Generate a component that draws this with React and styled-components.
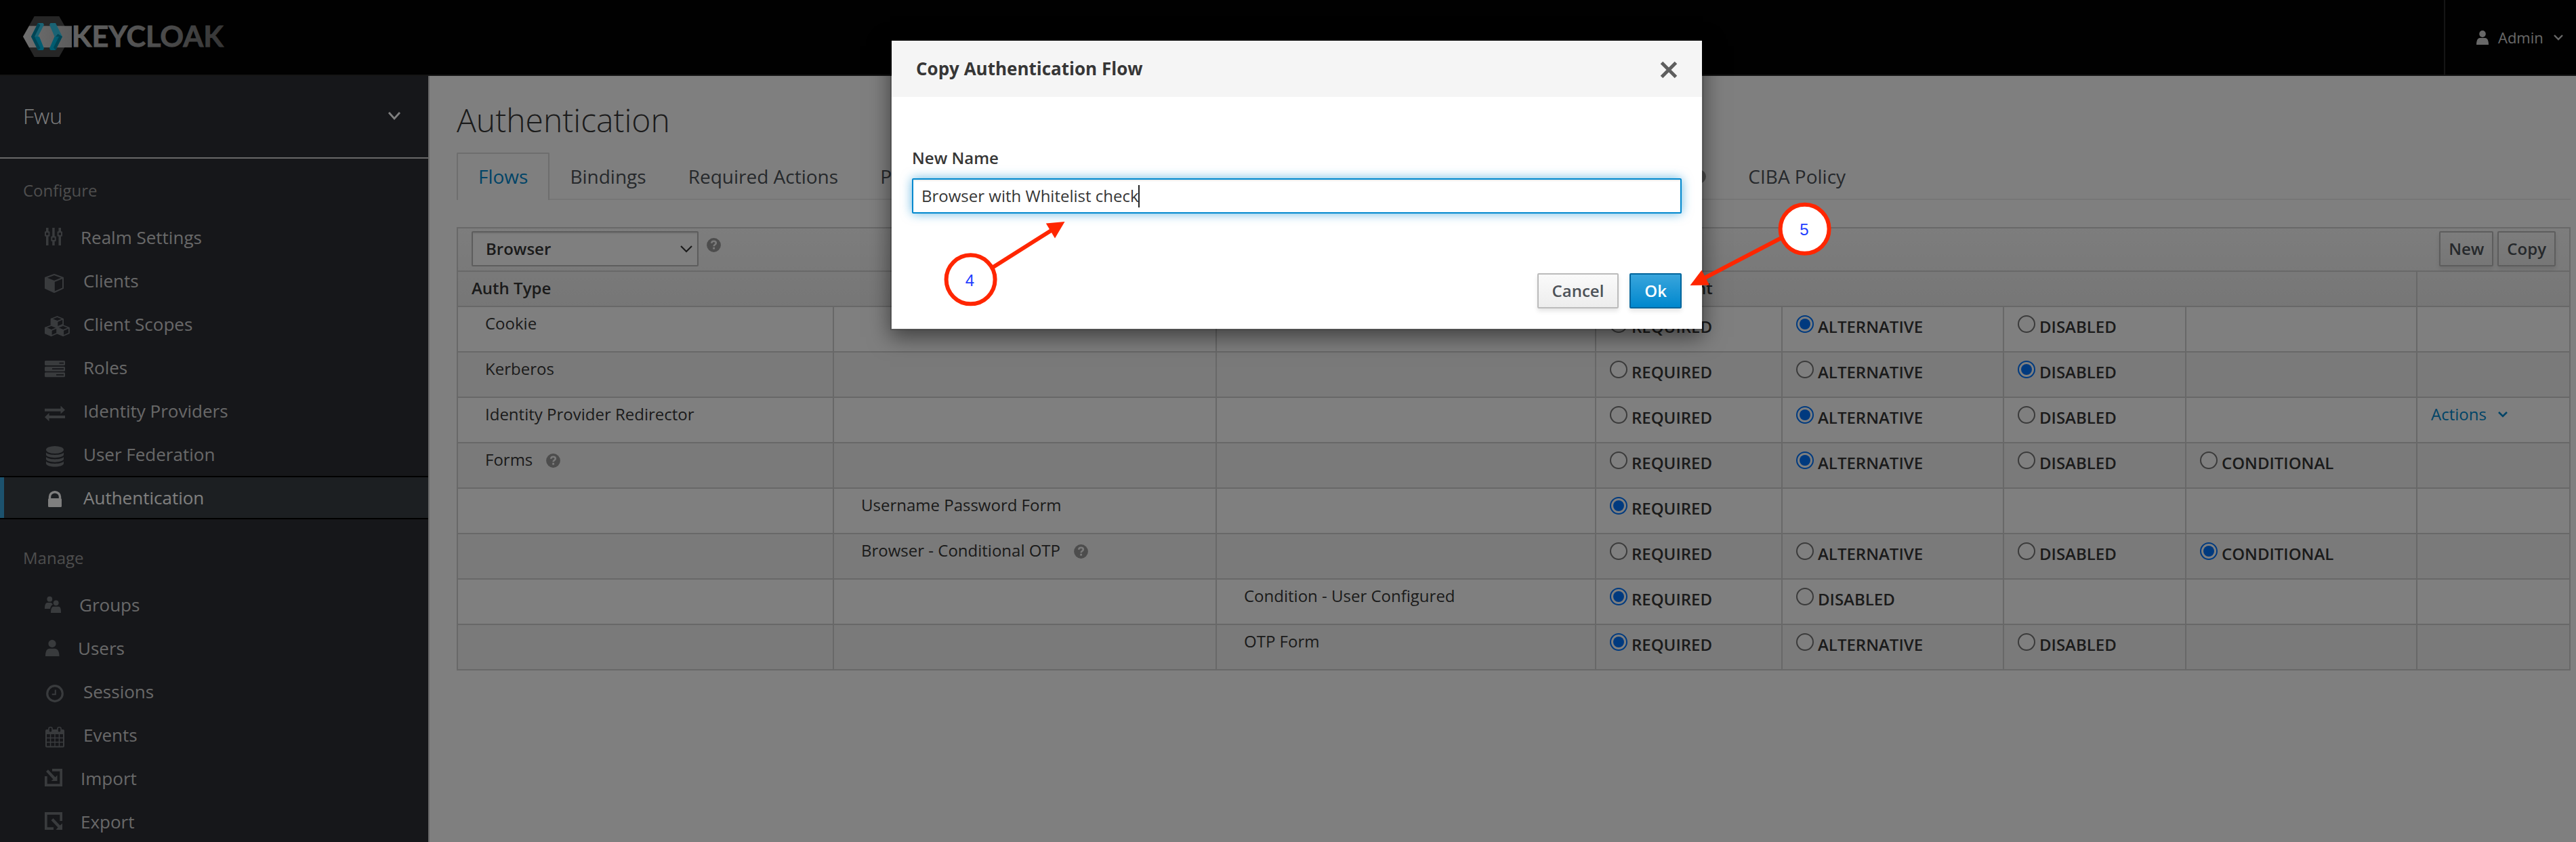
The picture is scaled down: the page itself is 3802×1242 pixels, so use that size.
import React from 'react';
import styled, { createGlobalStyle, css } from 'styled-components';

const GlobalStyle = createGlobalStyle`
  * { box-sizing: border-box; }
  html, body { margin: 0; padding: 0; }
  body {
    font-family: 'Open Sans', 'Noto Sans', sans-serif;
    font-size: 24px;
    line-height: 40px;
    color: #363636;
    background: #fff;
    overflow: hidden;
  }
`;

const Page = styled.div`
  position: relative;
  display: flex;
  flex-direction: column;
  width: 3802px;
  height: 1242px;
  overflow: hidden;
  background: #fff;
`;

/* ---------- top bar ---------- */

const TopBar = styled.header`
  flex: none;
  display: flex;
  justify-content: space-between;
  height: 112px;
  padding-left: 34px;
  background: #030303;
  border-bottom: 2px solid #2b2b2b;
`;

const LogoArt = styled.svg`
  display: block;
  width: 300px;
  height: 60px;
  margin-top: 24px;
`;

const UserMenu = styled.div`
  display: flex;
  align-items: center;
  width: 195px;
  padding-left: 46px;
  border-left: 2px solid #2b2b2b;
  color: #d1d1d1;
  font-size: 22px;
  line-height: 110px;

  span { margin: 0 15px 0 14px; }
`;

const Glyph = styled.svg`
  display: block;
  flex: none;
  overflow: visible;
  width: ${(p) => p.$w}px;
  height: ${(p) => p.$h}px;
  fill: currentColor;
`;

/* ---------- side bar ---------- */

const Body = styled.div`
  flex: 1;
  display: flex;
  min-height: 0;
`;

const Sidebar = styled.nav`
  flex: none;
  width: 634px;
  overflow: hidden;
  background: #2c2e35;
  border-right: 2px solid #d1d1d1;
`;

const RealmSelector = styled.div`
  display: flex;
  align-items: center;
  justify-content: space-between;
  height: 122px;
  padding: 0 41px 2px 34px;
  border-bottom: 2px solid #d1d1d1;
  color: #fff;
  font-size: 32px;
  font-weight: 300;
`;

const SectionTitle = styled.h2`
  margin: 0;
  height: ${(p) => p.$height}px;
  padding: ${(p) => p.$height - 57}px 0 0 34px;
  color: #9c9c9c;
  font-size: 24px;
  font-weight: 400;
`;

const NavItem = styled.a`
  position: relative;
  display: flex;
  height: 64px;
  padding-left: 66px;
  gap: 27px;
  line-height: 64px;
  font-size: 26px;
  color: #d1d1d1;

  svg { color: #72767b; }

  ${(p) => p.$active && css`
    color: #fff;
    background: #393f44;
    box-shadow: inset 0 2px #030303, inset 0 -2px #030303;
    svg { color: #fff; }
    &::before {
      content: '';
      position: absolute;
      inset: 2px auto 2px 0;
      width: 6px;
      background: #39a5dc;
    }
  `}
`;

/* ---------- main content ---------- */

const Content = styled.main`
  flex: 1;
  min-width: 0;
  padding: 38px 8px 0 40px;
`;

const Title = styled.h1`
  margin: 0 0 21px;
  font-size: 48px;
  line-height: 54px;
  font-weight: 300;
`;

const Tabs = styled.div`
  display: flex;
  height: 70px;
  border-bottom: 2px solid #ededed;
`;

const Tab = styled.a`
  display: flex;
  align-items: center;
  gap: 11px;
  height: 70px;
  margin-right: -2px;
  padding: 0 30px 2px;
  border: 2px solid transparent;
  border-bottom: 0;
  font-size: 28px;
  color: #4d5258;
  white-space: nowrap;

  ${(p) => p.$active && css`
    color: #0088ce;
    border-color: #dcdcdc;
    border-radius: 2px 2px 0 0;
    background: #fff;
  `}
`;

const Table = styled.div`
  margin-top: 40px;
  border: 2px solid #d1d1d1;
  border-width: 2px 0 0 2px;
`;

const TableHead = styled.div`
  background: linear-gradient(#fafafa, #ededed);
`;

const Toolbar = styled.div`
  display: flex;
  align-items: flex-start;
  height: 64px;
  padding: 4px 20px 0;
  border: 2px solid #d1d1d1;
  border-width: 0 2px 2px 0;
`;

const FlowSelect = styled.div`
  display: flex;
  align-items: center;
  justify-content: space-between;
  width: 335px;
  height: 52px;
  margin-right: 12px;
  padding: 0 7px 0 19px;
  background: #fff;
  border: 2px solid #bbb;
  border-radius: 2px;
  box-shadow: inset 0 2px 2px rgba(3, 3, 3, 0.075);
  font-weight: 600;

  & + svg { margin-top: 10px; }
`;

const ToolbarActions = styled.div`
  display: flex;
  gap: 6px;
  margin-left: auto;
`;

const Button = styled.button`
  height: 52px;
  padding: 0 ${(p) => (p.$compact ? 12 : 20)}px;
  border: 2px solid ${(p) => (p.$primary ? '#00659c' : '#bbb')};
  border-radius: 2px;
  background: ${(p) => (p.$primary
    ? 'linear-gradient(#39a5dc, #0088ce)'
    : 'linear-gradient(#fafafa, #ededed)')};
  box-shadow: 0 4px 6px rgba(3, 3, 3, 0.1);
  color: ${(p) => (p.$primary ? '#fff' : '#4d5258')};
  font: 600 24px/46px 'Open Sans', 'Noto Sans', sans-serif;
`;

const columns = '555px 565px 560px 275px 327px 269px 341px 226px';

const Row = styled.div`
  display: grid;
  grid-template-columns: ${columns};
  height: ${(p) => (p.$head ? 52 : 67)}px;
  background: ${(p) => (p.$striped ? '#f5f5f5' : 'transparent')};
`;

const Cell = styled.div`
  display: flex;
  align-items: flex-start;
  grid-column: span ${(p) => p.$span || 1};
  padding: 4px 0 0 ${(p) => (p.$indent ? 40 : 20)}px;
  border: 2px solid #d1d1d1;
  border-width: 0 2px 2px 0;
  font-weight: ${(p) => (p.$strong ? 600 : 400)};
  white-space: nowrap;

  svg { margin: 11px 0 0 20px; }
`;

const Option = styled.label`
  display: flex;
  gap: 6px;
  padding-top: 5px;
  font-weight: 600;
`;

const Radio = styled.span`
  flex: none;
  display: grid;
  place-items: center;
  width: 26px;
  height: 26px;
  margin-top: 3px;
  border: 2px solid ${(p) => (p.$on ? '#0075ff' : '#767676')};
  border-radius: 50%;
  background: #fff;

  &::after {
    content: '';
    width: 16px;
    height: 16px;
    border-radius: 50%;
    background: ${(p) => (p.$on ? '#0075ff' : 'transparent')};
  }
`;

const ActionsLink = styled.a`
  display: flex;
  align-items: center;
  gap: 17px;
  color: #0088ce;

  svg { margin: 1px 0 0; }
`;

/* ---------- dialog ---------- */

const Backdrop = styled.div`
  position: absolute;
  inset: 0;
  display: flex;
  align-items: flex-start;
  justify-content: center;
  padding: 58px 0 0 26px;
  background: rgba(0, 0, 0, 0.5);
`;

const Dialog = styled.section`
  width: 1200px;
  height: 429px;
  border: 2px solid rgba(0, 0, 0, 0.2);
  background: #fff;
  background-clip: padding-box;
  box-shadow: 0 10px 30px rgba(0, 0, 0, 0.5);
`;

const DialogHeader = styled.div`
  display: flex;
  justify-content: space-between;
  height: 83px;
  padding: 0 36px;
  background: #f5f5f5;
  font-size: 26px;
  font-weight: 700;
  line-height: 82px;

  svg { margin-top: 30px; color: #5e5e5e; }
`;

const DialogBody = styled.div`
  display: flex;
  flex-direction: column;
  padding: 70px 30px 0;
`;

const FieldLabel = styled.label`
  margin-bottom: 10px;
  font-weight: 600;
`;

const TextField = styled.div`
  display: flex;
  align-items: center;
  height: 52px;
  padding-left: 12px;
  border: 2px solid #0088ce;
  border-radius: 2px;
  box-shadow: inset 0 2px 2px rgba(3, 3, 3, 0.075), 0 0 16px rgba(0, 136, 206, 0.6);
  background: #fff;
`;

const Caret = styled.i`
  width: 2px;
  height: 33px;
  margin-left: -1px;
  background: #222;
`;

const DialogFooter = styled.div`
  display: flex;
  justify-content: flex-end;
  gap: 16px;
  padding: 88px 30px 0;
`;

const Callouts = styled.svg`
  position: absolute;
  inset: 0;
  width: 3802px;
  height: 1242px;
  pointer-events: none;

  circle { fill: #fff; stroke: #ff2600; stroke-width: 6; }
  line { stroke: #ff2600; stroke-width: 6; }
  polygon { fill: #ff2600; }
  text {
    fill: #1f3fff;
    font: 24px 'Liberation Sans', Arial, sans-serif;
    text-anchor: middle;
  }
`;

/* ---------- drawings ---------- */

function Logo() {
  return (
    <LogoArt viewBox="0 0 300 60">
      <defs>
        <linearGradient id="band" x1="0" x2="1">
          <stop offset="0" stopColor="#dedede" />
          <stop offset="1" stopColor="#b8b8b8" />
        </linearGradient>
        <linearGradient id="word" gradientUnits="userSpaceOnUse" x1="75" y1="0" x2="296" y2="10">
          <stop offset="0" stopColor="#c4c4c4" />
          <stop offset="0.55" stopColor="#9c9c9c" />
          <stop offset="1" stopColor="#6c6c6c" />
        </linearGradient>
      </defs>
      <path d="M16.7 0H53.3L70.500 30L53.3 60H16.7L0 30Z" fill="#4d4d4d" />
      <path d="M0 30L9 14.300H72V46H9Z" fill="url(#band)" />
      <path d="M22 10h7.500l1.500 2.500L22 30H12Z" fill="#33c6e9" />
      <path d="M12 30h12l7 17.500L29.500 50H22Z" fill="#00b8e3" />
      <path d="M12 30L22 10L25.500 13L17 30L25.500 47L22 50Z" fill="#008aaa" />
      <path d="M39 12.500L40.500 10H48L58 30H46.500Z" fill="#33c6e9" />
      <path d="M46.500 30H58L48 50H40.500L39 47.500Z" fill="#00b8e3" />
      <path d="M48 30l3.500-4L58 30L48 50L45 46L53 30Z" fill="#008aaa" />
      <text
        x="71.800"
        y="45.200"
        textLength="224"
        lengthAdjust="spacingAndGlyphs"
        fill="url(#word)"
        stroke="url(#word)"
        strokeWidth="0.8"
        fontFamily="Lato, 'Open Sans', sans-serif"
        fontWeight="700"
        fontSize="41.500"
      >
        KEYCLOAK
      </text>
    </LogoArt>
  );
}

function Chevron({ w, h, t }) {
  return (
    <Glyph $w={w} $h={h} viewBox={`0 0 ${w} ${h}`}>
      <path
        d={`M1 1L${w / 2} ${h - 2}L${w - 1} 1`}
        fill="none"
        stroke="currentColor"
        strokeWidth={t}
      />
    </Glyph>
  );
}

function Help() {
  return (
    <Glyph $w={21} $h={21} viewBox="0 0 21 21">
      <circle cx="10.500" cy="10.500" r="10.400" fill="#9a9a9a" />
      <path
        d="M7.200 7.800C7.300 5.700 8.700 4.700 10.500 4.700S13.800 5.800 13.800 7.500C13.800 9.700 10.600 9.700 10.600 12.300"
        fill="none"
        stroke="#f5f5f5"
        strokeWidth="2.600"
      />
      <rect x="9.200" y="13.800" width="2.800" height="2.800" fill="#f5f5f5" />
    </Glyph>
  );
}

function Person() {
  return (
    <Glyph $w={18} $h={21} viewBox="0 0 18 21">
      <ellipse cx="9" cy="5" rx="4.800" ry="5" />
      <path d="M0 21C0 14.500 2 11 5 11H13C16 11 18 14.500 18 21Z" />
    </Glyph>
  );
}

/* Each drawing starts at the left edge of its slot and spans the 64px row. */
const icons = {
  sliders: [26, (
    <>
      <path d="M2 18h3.500v26H2zM11.200 18h3.500v26h-3.500zM20.500 18H24v26h-3.500z" />
      <path d="M0 24.500q0-1.200 1.200-1.200h5q1.200 0 1.200 1.200v5q0 1.200-1.200 1.200h-5Q0 30.700 0 29.500zM9.300 31.800q0-1.200 1.200-1.200h5q1.200 0 1.200 1.200v5q0 1.200-1.200 1.200h-5q-1.200 0-1.200-1.200zM18.600 24.500q0-1.200 1.200-1.200h5q1.200 0 1.200 1.200v5q0 1.200-1.200 1.200h-5q-1.200 0-1.200-1.200z" />
      <path d="M2 25.300h3.400v3.400H2zM11.300 32.600h3.400V36h-3.400zM20.600 25.300H24v3.400h-3.400z" fill="#2c2e35" />
    </>
  )],
  cube: [30, (
    <>
      <path d="M14 23L27 27.800V43.200L14 49L1 43.200V27.800ZM1 27.800L14 33L27 27.800" fill="none" stroke="currentColor" strokeWidth="2" strokeLinejoin="round" />
      <path d="M1 27.800L14.800 33V49.500L1 43.200Z" />
    </>
  )],
  cubes: [30, (
    <g stroke="currentColor" strokeWidth="1.800" strokeLinejoin="round">
      {[[9.700, 21], [1, 34], [18.500, 34]].map(([x, y]) => (
        <g key={x} transform={`translate(${x} ${y})`}>
          <path d="M8.700 0L17.400 3.500V11.500L8.700 15.300L0 11.500V3.500ZM0 3.500L8.700 7.200L17.400 3.500" fill="none" />
          <path d="M0 3.500L8.700 7.200V15.300L0 11.500Z" />
        </g>
      ))}
    </g>
  )],
  server: [30, (
    <path
      fillRule="evenodd"
      d="M1 22H29l1 1v5l-1 1H1l-1-1v-5zM21.500 24.700v1.800H28v-1.800zM1 30.700H29l1 1v5l-1 1H1l-1-1v-5zM11 33.300v1.800H28v-1.800zM1 39.300H29l1 1v5l-1 1H1l-1-1v-5zM17 42v1.800H28V42z"
    />
  )],
  exchange: [30, (
    <path d="M0 28.700H23.500V24.500L30 30.700L23.500 36.500V32.700H0zM30 39H6.500V35L0 41.300L6.500 47.500V43H30z" />
  )],
  database: [30, (
    <>
      <ellipse cx="15" cy="25.500" rx="13" ry="5.500" />
      <path d="M2 29.500C5 34 25 34 28 29.500V33C26 38.500 4 38.500 2 33zM2 36C5 40.500 25 40.500 28 36V39.500C26 45 4 45 2 39.500zM2 42.500C5 47 25 47 28 42.500V46C26 52 4 52 2 46z" />
    </>
  )],
  lock: [30, (
    <>
      <path d="M7.500 33V30.500a7.500 7 0 0 1 15 0V33" fill="none" stroke="currentColor" strokeWidth="3.400" transform="translate(0 .3)" />
      <rect x="5" y="33" width="20" height="13" rx="1.500" />
    </>
  )],
  group: [24, (
    <>
      <circle cx="7.300" cy="23.700" r="3.900" />
      <path d="M0 38C0 32 1.500 29 4 29H9.500L12 31.500C9.500 33 8.500 35 8 38Z" />
      <circle cx="16.700" cy="29.300" r="3.900" />
      <path d="M9 44C9 37.500 10.500 34.800 13 34.800H20.500C23 34.800 24 37.500 24 44Z" />
    </>
  )],
  user: [22, (
    <>
      <circle cx="11" cy="25.400" r="5.600" />
      <path d="M1 44C1 36 3.500 32.800 7 32.800H15C18.500 32.800 21.500 36 21.500 44Z" />
    </>
  )],
  clock: [30, (
    <>
      <circle cx="15" cy="35" r="11.300" fill="none" stroke="currentColor" strokeWidth="3.200" />
      <path d="M15.800 29.500V36.200H10.700" fill="none" stroke="currentColor" strokeWidth="2" />
    </>
  )],
  calendar: [30, (
    <>
      <path
        fillRule="evenodd"
        d="M3 24H27q2 0 2 2V48.500q0 2-2 2H3q-2 0-2-2V26q0-2 2-2zM3 31v4.800h4.800V31zM9.300 31v4.800h5V31zM15.700 31v4.800h5V31zM22.200 31v4.800H27V31zM3 37.300v4.800h4.800v-4.800zM9.300 37.300v4.800h5v-4.800zM15.700 37.300v4.800h5v-4.800zM22.200 37.300v4.800H27v-4.800zM3 43.600v4.800h4.800v-4.800zM9.300 43.600v4.800h5v-4.800zM15.700 43.600v4.800h5v-4.800zM22.200 43.600v4.800H27v-4.800z"
      />
      <rect x="6" y="20.800" width="5" height="7.500" rx="2" stroke="currentColor" strokeWidth="1.600" fill="#2c2e35" />
      <rect x="19" y="20.800" width="5" height="7.500" rx="2" stroke="currentColor" strokeWidth="1.600" fill="#2c2e35" />
    </>
  )],
  importBox: [26, (
    <>
      <path d="M11 18H26V44H0V29H3.700V40.300H22.300V21.700H11Z" />
      <path d="M2 22L5 19.200L15.500 30.500L18.500 27.500V36H9.500L12.500 33.500Z" />
    </>
  )],
  exportBox: [26, (
    <>
      <path d="M0 18H26V31H22.300V21.700H3.700V40.300H13V44H0Z" />
      <path d="M9.500 30L12.500 27L22.500 37.500L26 34.500V44H16.500L19.500 40.500Z" />
    </>
  )],
};

function NavIcon({ name }) {
  const [width, art] = icons[name];
  return (
    <Glyph $w={width} $h={64} viewBox={`0 0 ${width} 64`}>
      {art}
    </Glyph>
  );
}

/* ---------- data ---------- */

const configure = [
  ['sliders', 'Realm Settings'],
  ['cube', 'Clients'],
  ['cubes', 'Client Scopes'],
  ['server', 'Roles'],
  ['exchange', 'Identity Providers'],
  ['database', 'User Federation'],
  ['lock', 'Authentication'],
];

const manage = [
  ['group', 'Groups'],
  ['user', 'Users'],
  ['clock', 'Sessions'],
  ['calendar', 'Events'],
  ['importBox', 'Import'],
  ['exportBox', 'Export'],
];

const tabs = [
  { label: 'Flows', active: true },
  { label: 'Bindings' },
  { label: 'Required Actions' },
  { label: 'Password Policy' },
  { label: 'OTP Policy' },
  { label: 'WebAuthn Policy', help: true },
  { label: 'WebAuthn Passwordless Policy', help: true },
  { label: 'CIBA Policy' },
];

const R = 'REQUIRED';
const A = 'ALTERNATIVE';
const D = 'DISABLED';
const C = 'CONDITIONAL';

const executions = [
  { level: 0, name: 'Cookie', options: [R, A, D], value: A },
  { level: 0, name: 'Kerberos', options: [R, A, D], value: D },
  { level: 0, name: 'Identity Provider Redirector', options: [R, A, D], value: A, actions: true },
  { level: 0, name: 'Forms', help: true, options: [R, A, D, C], value: A },
  { level: 1, name: 'Username Password Form', options: [R], value: R },
  { level: 1, name: 'Browser - Conditional OTP', help: true, options: [R, A, D, C], value: C },
  { level: 2, name: 'Condition - User Configured', options: [R, D], value: R },
  { level: 2, name: 'OTP Form', options: [R, A, D], value: R },
];

function NavSection({ title, height, items }) {
  return (
    <>
      <SectionTitle $height={height}>{title}</SectionTitle>
      {items.map(([icon, label]) => (
        <NavItem key={label} $active={label === 'Authentication'}>
          <NavIcon name={icon} />
          {label}
        </NavItem>
      ))}
    </>
  );
}

function ExecutionRow({ item, striped }) {
  return (
    <Row $striped={striped}>
      {[0, 1, 2].map((level) => (
        <Cell key={level} $indent>
          {item.level === level && item.name}
          {item.level === level && item.help && <Help />}
        </Cell>
      ))}
      {[0, 1, 2, 3].map((i) => (
        <Cell key={i}>
          {item.options[i] && (
            <Option>
              <Radio $on={item.options[i] === item.value} />
              {item.options[i]}
            </Option>
          )}
        </Cell>
      ))}
      <Cell>
        {item.actions && (
          <ActionsLink>
            Actions
            <Chevron w={14} h={9} t={2.6} />
          </ActionsLink>
        )}
      </Cell>
    </Row>
  );
}

export default function App() {
  return (
    <Page>
      <GlobalStyle />
      <TopBar>
        <Logo />
        <UserMenu>
          <Person />
          <span>Admin</span>
          <Chevron w={14} h={9} t={2.4} />
        </UserMenu>
      </TopBar>
      <Body>
        <Sidebar>
          <RealmSelector>
            Fwu
            <Chevron w={18} h={12} t={2.8} />
          </RealmSelector>
          <NavSection title="Configure" height={84} items={configure} />
          <NavSection title="Manage" height={94} items={manage} />
        </Sidebar>
        <Content>
          <Title>Authentication</Title>
          <Tabs>
            {tabs.map((tab) => (
              <Tab key={tab.label} $active={tab.active}>
                {tab.label}
                {tab.help && <Help />}
              </Tab>
            ))}
          </Tabs>
          <Table>
            <TableHead>
              <Toolbar>
                <FlowSelect>
                  Browser
                  <Chevron w={18} h={11} t={2.2} />
                </FlowSelect>
                <Help />
                <ToolbarActions>
                  <Button $compact>New</Button>
                  <Button $compact>Copy</Button>
                </ToolbarActions>
              </Toolbar>
              <Row $head>
                <Cell $span={3} $strong>Auth Type</Cell>
                <Cell $span={4} $strong>Requirement</Cell>
                <Cell />
              </Row>
            </TableHead>
            {executions.map((item, i) => (
              <ExecutionRow key={item.name} item={item} striped={i % 2 === 1} />
            ))}
          </Table>
        </Content>
      </Body>
      <Backdrop>
        <Dialog>
          <DialogHeader>
            Copy Authentication Flow
            <Glyph $w={26} $h={26} viewBox="0 0 26 26">
              <path d="M2.500 2.500L23.500 23.500M23.500 2.500L2.500 23.500" stroke="currentColor" strokeWidth="5" fill="none" />
            </Glyph>
          </DialogHeader>
          <DialogBody>
            <FieldLabel>New Name</FieldLabel>
            <TextField>
              Browser with Whitelist check
              <Caret />
            </TextField>
          </DialogBody>
          <DialogFooter>
            <Button>Cancel</Button>
            <Button $primary>Ok</Button>
          </DialogFooter>
        </Dialog>
      </Backdrop>
      <Callouts viewBox="0 0 3802 1242">
        <line x1="1432.600" y1="415" x2="1553" y2="339" />
        <polygon points="1571.500,327 1543.800,329.500 1557,351.500" />
        <circle cx="1432.600" cy="412.300" r="36" />
        <text x="1431.500" y="421.500">4</text>
        <line x1="2663.600" y1="333" x2="2514" y2="411" />
        <polygon points="2494.500,421 2511.500,398.500 2523,420.500" />
        <circle cx="2663.600" cy="337.800" r="36" />
        <text x="2663" y="346.500">5</text>
      </Callouts>
    </Page>
  );
}
